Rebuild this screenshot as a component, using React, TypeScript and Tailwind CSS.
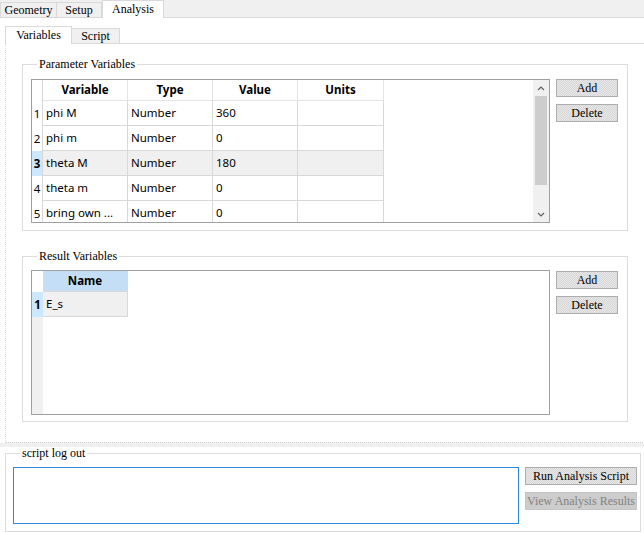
import React from "react";

const simFont = "font-['Liberation_Serif',serif] text-[12px]";
const sim = `${simFont} text-black`;
const ui = "font-['Noto_Sans',sans-serif] text-[11.5px] text-black";

const Chevron = ({ down }: { down?: boolean }) => (
  <svg width="8" height="5" viewBox="0 0 8 5">
    <path
      d={down ? "M1 1 L4 4 L7 1" : "M1 4 L4 1 L7 4"}
      fill="none"
      stroke="#606060"
      strokeWidth="1.2"
    />
  </svg>
);

const Btn = ({
  label,
  wide,
  disabled,
}: {
  label: string;
  wide?: boolean;
  disabled?: boolean;
}) => (
  <button
    className={`${simFont} flex h-[18px] items-center justify-center whitespace-nowrap border leading-none ${
      wide ? "w-[112px]" : "w-[62px]"
    } ${
      disabled
        ? "border-[#c4c4c4] bg-[#cccccc] text-[#838383]"
        : "border-[#adadad] bg-[repeating-conic-gradient(#e8e8e8_0_25%,#d6d6d6_0_50%)] bg-[length:2px_2px] text-black"
    }`}
  >
    {label}
  </button>
);

const params = [
  ["phi M", "Number", "360"],
  ["phi m", "Number", "0"],
  ["theta M", "Number", "180"],
  ["theta m", "Number", "0"],
  ["bring own ...", "Number", "0"],
];

const ParamTable = () => (
  <div className={`${ui} flex h-[144px] w-[519px] border border-[#a0a0a0] bg-white`}>
    <div className="flex-1 overflow-hidden">
      <div className="flex h-[21px]">
        <div className="w-[11px] border-r border-[#d8d8d8]" />
        {["Variable", "Type", "Value", "Units"].map((c, i) => (
          <div
            key={c}
            className={`flex items-center justify-center border-r border-b border-[#e5e5e5] font-bold ${
              i === 3 ? "w-[86px]" : "w-[85px]"
            }`}
          >
            {c}
          </div>
        ))}
      </div>
      {params.map((r, i) => {
        const sel = i === 2;
        return (
          <div key={i} className="flex h-[25px]">
            <div
              className={`flex w-[11px] items-center justify-center border-r border-[#d8d8d8] ${
                sel ? "bg-[#cce8ff] font-bold" : ""
              }`}
            >
              {i + 1}
            </div>
            {r.map((v, j) => (
              <div
                key={j}
                className={`flex w-[85px] items-center whitespace-nowrap border-r border-b border-[#d8d8d8] pl-[3px] ${
                  sel ? "bg-[#f0f0f0]" : ""
                }`}
              >
                {v}
              </div>
            ))}
            <div
              className={`w-[86px] border-r border-b border-[#d8d8d8] ${sel ? "bg-[#f0f0f0]" : ""}`}
            />
          </div>
        );
      })}
    </div>
    {/* vertical scrollbar */}
    <div className="flex w-[16px] flex-col bg-[#f0f0f0]">
      <div className="flex h-[16px] items-center justify-center">
        <Chevron />
      </div>
      <div className="flex-1 px-[2px]">
        <div className="h-[89px] bg-[#cdcdcd]" />
      </div>
      <div className="flex h-[16px] items-center justify-center">
        <Chevron down />
      </div>
    </div>
  </div>
);

const ResultTable = () => (
  <div className={`${ui} flex h-[145px] w-[519px] border border-[#a0a0a0] bg-white`}>
    <div className="flex w-[11px] flex-col bg-[#f0f0f0]">
      <div className="h-[21px] bg-white" />
      <div className="flex h-[25px] items-center justify-center bg-[#cce8ff] font-bold">1</div>
    </div>
    <div className="flex w-[85px] flex-col">
      <div className="flex h-[21px] items-center justify-center border-r border-b border-[#d8d8d8] bg-[#c4dff5] font-bold">
        Name
      </div>
      <div className="flex h-[25px] items-center border-r border-b border-[#d8d8d8] bg-[#f0f0f0] pl-[3px]">
        E_s
      </div>
    </div>
  </div>
);

const Group = ({
  title,
  className,
  children,
}: {
  title: string;
  className: string;
  children: React.ReactNode;
}) => (
  <fieldset className={`border border-[#dcdcdc] ${className}`}>
    <legend className={`${sim} ml-[6px] px-[2px] leading-[14px]`}>{title}</legend>
    {children}
  </fieldset>
);

export default function App() {
  return (
    <div className="h-[533px] w-[644px] overflow-hidden bg-white">
      {/* main tabs */}
      <div className={`${sim} flex h-[18px] items-end border-b border-[#d9d9d9] bg-[#f0f0f0]`}>
        <div className="flex h-[15px] w-[57px] items-center justify-center border-t border-r border-l border-[#d9d9d9] bg-[#f0f0f0]">
          Geometry
        </div>
        <div className="flex h-[15px] w-[45px] items-center justify-center border-t border-r border-[#d9d9d9] bg-[#f0f0f0]">
          Setup
        </div>
        <div className="relative z-10 -mb-px flex h-[18px] w-[62px] items-center justify-center border-t border-r border-l border-[#d9d9d9] bg-white pb-[2px]">
          Analysis
        </div>
      </div>

      {/* analysis pane */}
      <div className="h-[425px] pl-[5px]">
        <div className={`${sim} flex h-[25px] items-end`}>
          <div className="relative z-10 -mb-px flex h-[18px] w-[67px] items-center justify-center border-t border-r border-l border-[#d9d9d9] bg-white pb-[2px]">
            Variables
          </div>
          <div className="flex h-[15px] w-[48px] items-center justify-center border-t border-r border-[#d9d9d9] bg-[#f0f0f0]">
            Script
          </div>
        </div>
        <div className="h-[400px] w-[650px] border-t border-l border-b border-solid border-[#d9d9d9] border-b-[#c8c8c8] pt-[13px] pl-[16px] [border-bottom-style:dotted] [border-left-style:dotted]">
          <Group title="Parameter Variables" className="w-[606px] pr-[9px] pb-[7px] pl-[8px]">
            <div className="flex gap-[6px] pt-[8px]">
              <ParamTable />
              <div className="flex flex-col gap-[7px]">
                <Btn label="Add" />
                <Btn label="Delete" />
              </div>
            </div>
          </Group>
          <Group title="Result Variables" className="mt-[18px] w-[606px] pr-[9px] pb-[6px] pl-[8px]">
            <div className="flex gap-[6px] pt-[7px]">
              <ResultTable />
              <div className="flex flex-col gap-[7px] pt-[1px]">
                <Btn label="Add" />
                <Btn label="Delete" />
              </div>
            </div>
          </Group>
        </div>
      </div>

      {/* splitter */}
      <div className="h-[4px] bg-[#f0f0f0]" />

      {/* script log */}
      <div className="pl-[5px]">
        <fieldset className="h-[85px] w-[636px] border border-[#dcdcdc] pl-[7px]">
          <legend className={`${sim} ml-[7px] px-[2px] leading-[12px]`}>script log out</legend>
          <div className="flex gap-[6px] pt-[8px]">
            <textarea className="h-[57px] w-[506px] resize-none border border-[#2f88e0] bg-white outline-none" />
            <div className="flex flex-col gap-[7px]">
              <Btn label="Run Analysis Script" wide />
              <Btn label="View Analysis Results" wide disabled />
            </div>
          </div>
        </fieldset>
      </div>
    </div>
  );
}
